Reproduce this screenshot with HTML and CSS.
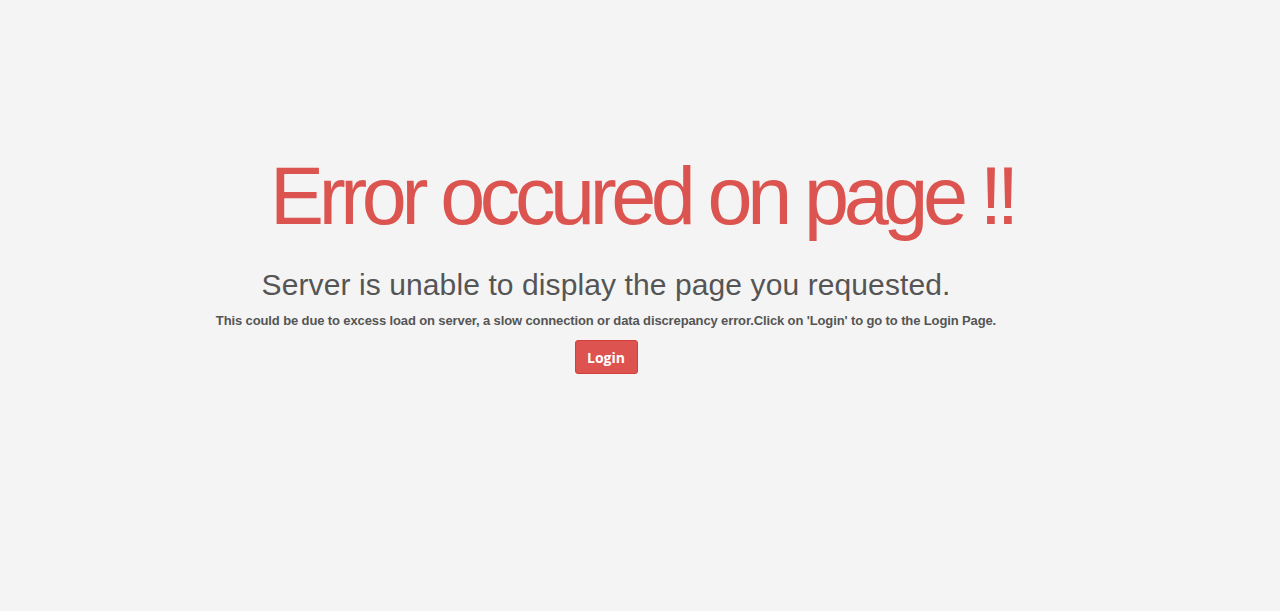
FILE: index.html
```html
<!DOCTYPE html>
<html lang="en">
<head>
<meta charset="utf-8">
<title>Error</title>
<link rel="stylesheet" href="styles.css">
</head>
<body>
<main class="error-page">
  <h1 class="error-title">Error occured on page !!</h1>
  <h2 class="error-subtitle">Server is unable to display the page you requested.</h2>
  <p class="error-text">This could be due to excess load on server, a slow connection or data discrepancy error.Click on 'Login' to go to the Login Page.</p>
  <a class="btn-login" href="#">Login</a>
</main>
</body>
</html>
```

FILE: styles.css
```css
html, body {
  margin: 0;
  padding: 0;
  background: #f4f4f4;
  height: 100%;
}

.error-page {
  display: flex;
  flex-direction: column;
  align-items: center;
  padding-top: 156px;
  margin-right: 68px;
  font-family: "Liberation Sans", Arial, sans-serif;
}

.error-title {
  margin: 0;
  font-size: 81px;
  line-height: 81px;
  font-weight: normal;
  letter-spacing: -5.4px;
  color: #dc5450;
  padding-left: 72px;
}

.error-subtitle {
  margin: 30px 0 0;
  font-size: 30px;
  line-height: 36px;
  font-weight: normal;
  letter-spacing: 0.1px;
  color: #555555;
}

.error-text {
  margin: 9px 0 0;
  font-size: 13px;
  line-height: 18px;
  font-weight: bold;
  letter-spacing: -0.12px;
  color: #555555;
}

.btn-login {
  margin-top: 10px;
  display: flex;
  align-items: center;
  justify-content: center;
  width: 63px;
  height: 34px;
  box-sizing: border-box;
  background: #dc5350;
  border: 1px solid #d43f3a;
  border-radius: 3px;
  color: #ffffff;
  font-family: "Open Sans", "Segoe UI", sans-serif;
  font-weight: 700;
  font-size: 14px;
  text-decoration: none;
}
```
